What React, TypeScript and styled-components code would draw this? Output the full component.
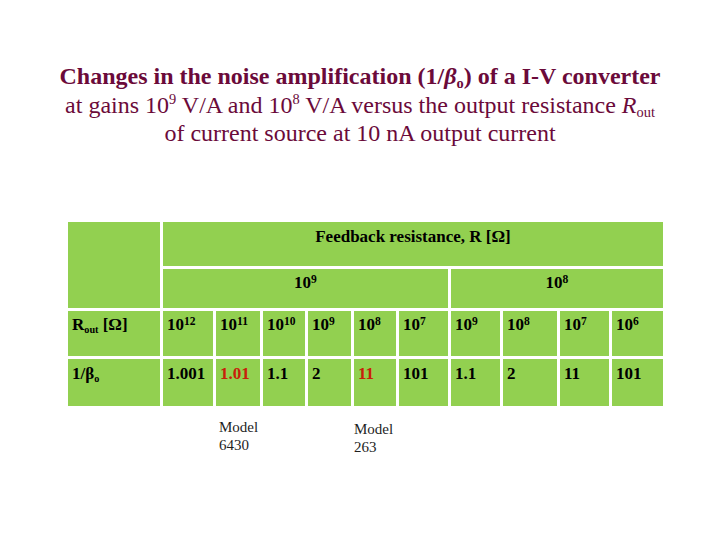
import React, { FC } from 'react';
import styled, { createGlobalStyle } from 'styled-components';

const GlobalStyle = createGlobalStyle`
  html, body {
    margin: 0;
    padding: 0;
    background: #ffffff;
  }
  body {
    font-family: "Liberation Serif", "Times New Roman", serif;
  }
`;

const COLUMNS = '92px 50px 44px 42px 43px 42px 49px 49px 54px 49px 51px';

export const Slide = styled.div`
  width: 720px;
  height: 540px;
  display: flex;
  flex-direction: column;
  align-items: center;
  padding-top: 62px;
  box-sizing: border-box;
  font-family: "Liberation Serif", "Times New Roman", serif;
`;

export const Title = styled.div`
  color: #6b0a3a;
  font-family: "Liberation Serif", "Times New Roman", serif;
  font-size: 24px;
  line-height: 28.5px;
  text-align: center;
`;

export const TitleLine = styled.div<{ $bold?: boolean }>`
  font-weight: ${({ $bold }) => ($bold ? 700 : 400)};
  white-space: nowrap;
`;

const Sub = styled.sub`
  font-size: 0.6em;
  vertical-align: -0.25em;
  line-height: 0;
`;

const Sup = styled.sup<{ $table?: boolean }>`
  font-size: ${({ $table }) => ($table ? '0.68em' : '0.6em')};
  vertical-align: ${({ $table }) => ($table ? '0.45em' : '0.6em')};
  line-height: 0;
`;

const Beta = styled.i`
  font-style: italic;
`;

export const TableWrapper = styled.div`
  margin-top: 74px;
  margin-left: 11px;
`;

export const Grid = styled.div`
  display: grid;
  grid-template-columns: ${COLUMNS};
  grid-template-rows: 44px 39px 45px 47px;
  gap: 3px;
  background: #ffffff;
`;

export const Cell = styled.div<{ $col?: string; $row?: string; $center?: boolean; $red?: boolean }>`
  grid-column: ${({ $col }) => $col ?? 'auto'};
  grid-row: ${({ $row }) => $row ?? 'auto'};
  background: #92d050;
  color: ${({ $red }) => ($red ? '#c8200a' : '#000000')};
  font-weight: 700;
  font-size: 17px;
  line-height: 19px;
  display: flex;
  justify-content: ${({ $center }) => ($center ? 'center' : 'flex-start')};
  align-items: flex-start;
  padding: ${({ $center }) => ($center ? '4px 0 0 0' : '4px 0 0 4px')};
  box-sizing: border-box;
  white-space: nowrap;
`;

export const Notes = styled.div`
  display: grid;
  grid-template-columns: ${COLUMNS};
  column-gap: 3px;
  margin-top: 12px;
`;

export const Note = styled.div<{ $col: number; $indent?: number; $drop?: number }>`
  grid-column: ${({ $col }) => $col};
  padding-left: ${({ $indent }) => $indent ?? 0}px;
  margin-top: ${({ $drop }) => $drop ?? 0}px;
  font-size: 15px;
  line-height: 18px;
  color: #1e1e1e;
  white-space: nowrap;
`;

const Pow: FC<{ e: string }> = ({ e }) => (
  <span>
    10<Sup $table>{e}</Sup>
  </span>
);

const routValues = ['12', '11', '10', '9', '8', '7', '9', '8', '7', '6'];
const betaValues: [string, boolean][] = [
  ['1.001', false],
  ['1.01', true],
  ['1.1', false],
  ['2', false],
  ['11', true],
  ['101', false],
  ['1.1', false],
  ['2', false],
  ['11', false],
  ['101', false],
];

const App: FC = () => (
  <>
    <GlobalStyle />
    <Slide>
      <Title>
        <TitleLine $bold>
          Changes in the noise amplification (1/<Beta>β</Beta>
          <Sub>o</Sub>) of a I-V converter
        </TitleLine>
        <TitleLine>
          at gains 10<Sup>9</Sup> V/A and 10<Sup>8</Sup> V/A versus the output resistance <i>R</i>
          <Sub>out</Sub>
        </TitleLine>
        <TitleLine>of current source at 10 nA output current</TitleLine>
      </Title>

      <TableWrapper>
        <Grid>
          <Cell $col="1" $row="1 / 3" />
          <Cell $col="2 / 12" $row="1" $center style={{ paddingTop: 5 }}>
            Feedback resistance, R [Ω]
          </Cell>
          <Cell $col="2 / 8" $row="2" $center>
            <Pow e="9" />
          </Cell>
          <Cell $col="8 / 12" $row="2" $center>
            <Pow e="8" />
          </Cell>

          <Cell $col="1" $row="3">
            <span>
              R<Sub>out</Sub> [Ω]
            </span>
          </Cell>
          {routValues.map((v, i) => (
            <Cell key={`r${i}`} $row="3">
              <Pow e={v} />
            </Cell>
          ))}

          <Cell $col="1" $row="4" style={{ paddingTop: 5 }}>
            <span>
              1/β<Sub>o</Sub>
            </span>
          </Cell>
          {betaValues.map(([v, red], i) => (
            <Cell key={`b${i}`} $row="4" $red={red} style={{ paddingTop: 5 }}>
              {v}
            </Cell>
          ))}
        </Grid>
        <Notes>
          <Note $col={3} $indent={3}>
            Model
            <br />
            6430
          </Note>
          <Note $col={6} $drop={2}>
            Model
            <br />
            263
          </Note>
        </Notes>
      </TableWrapper>
    </Slide>
  </>
);

export default App;
